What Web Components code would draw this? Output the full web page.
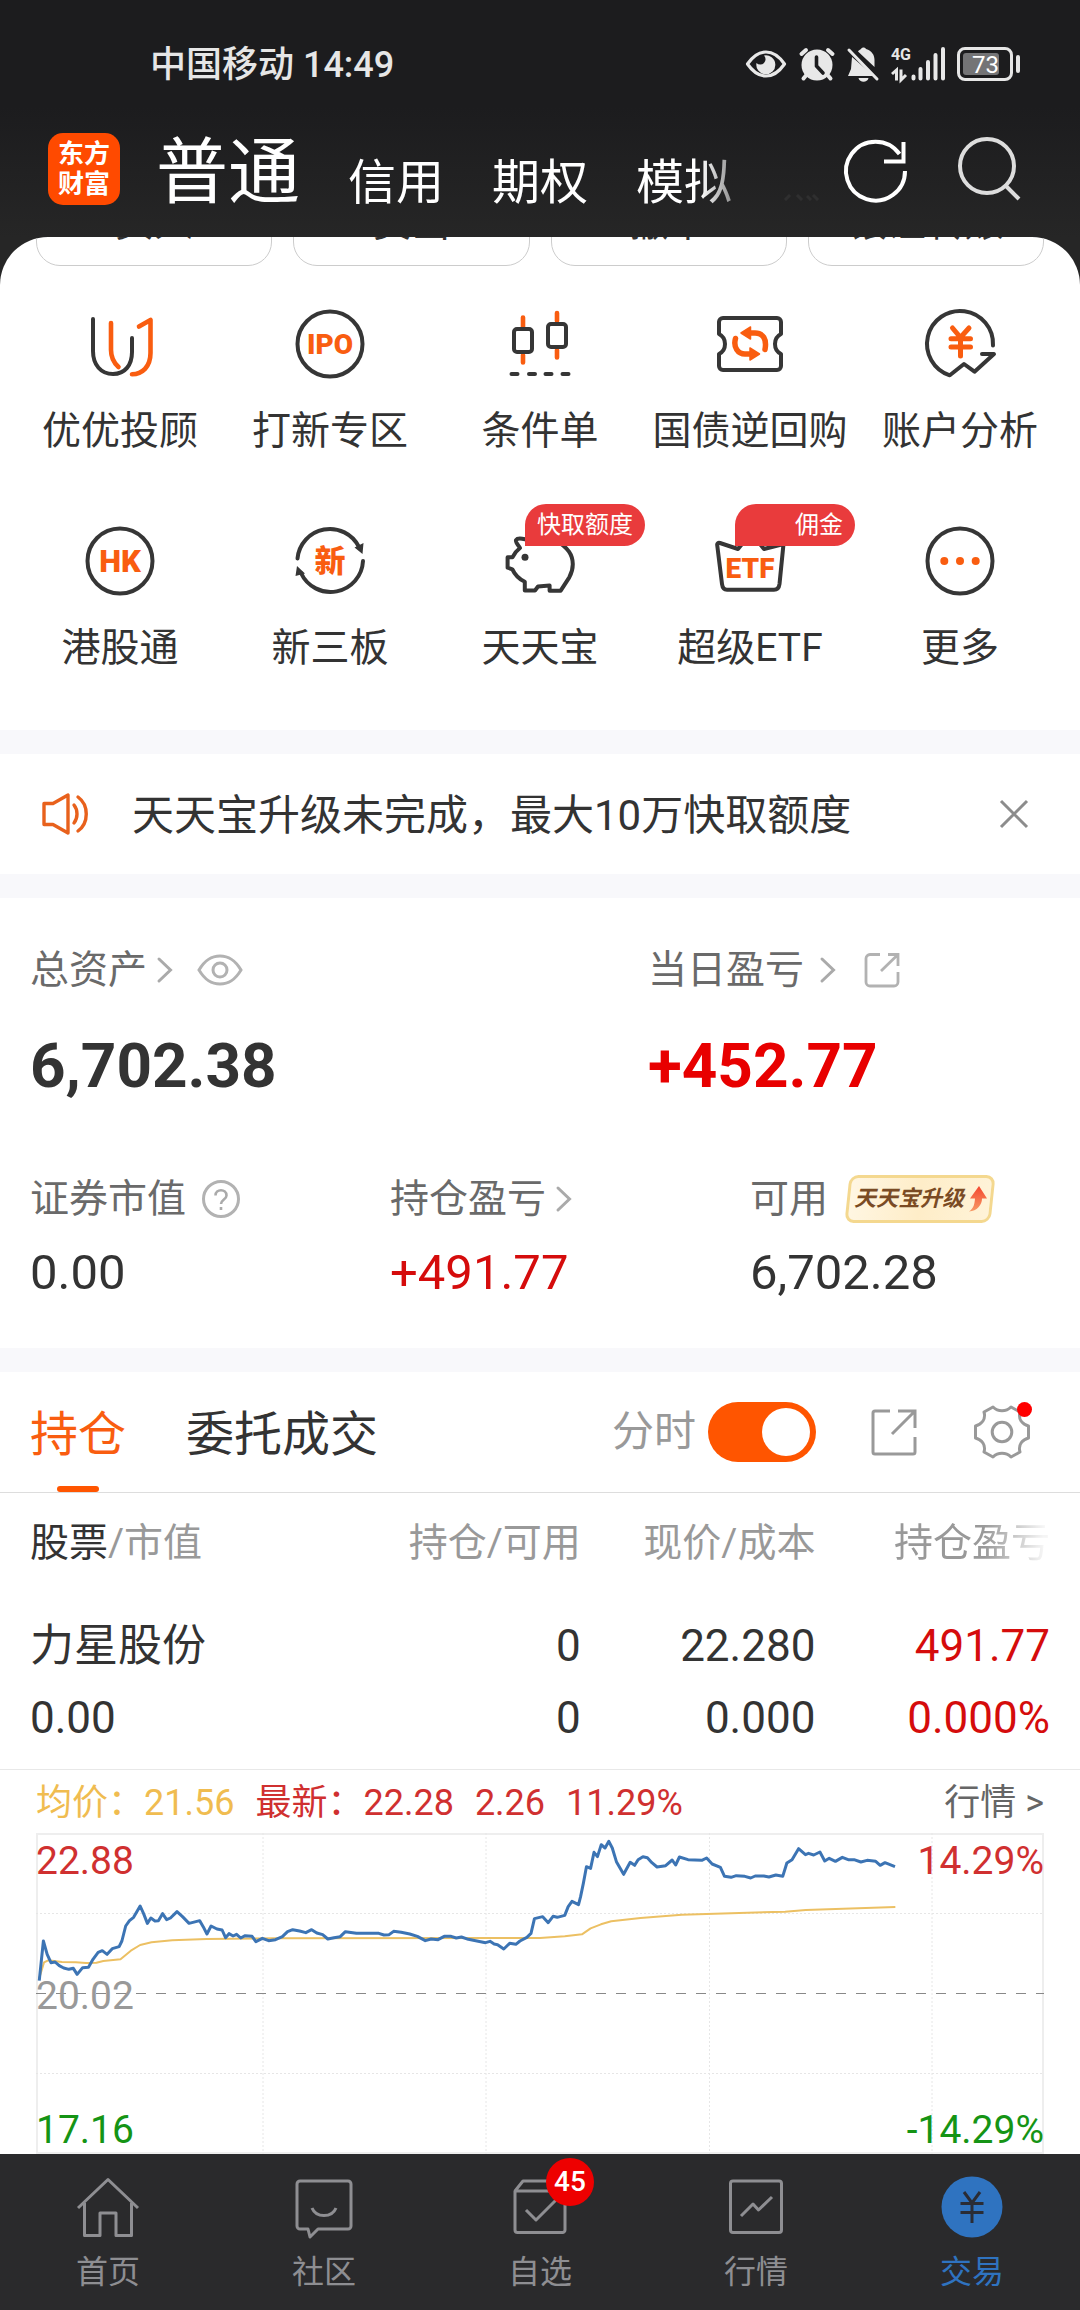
<!DOCTYPE html>
<html lang="zh-CN">
<head>
<meta charset="utf-8">
<meta name="viewport" content="width=device-width, initial-scale=1">
<title>交易</title>
<style>
  :root {
    --ink: #333;
    --muted: #666;
    --faint: #999;
    --brand: #ff5500;
    --up: #d50c0c;
    --band: #f8f8fb;
  }
  html, body { margin: 0; }
  body {
    font-family: Roboto, "Noto Sans CJK SC", sans-serif;
    color: var(--ink);
    background: #262626;
  }
</style>
</head>
<body>
<trade-page></trade-page>

<script>
const BASE = `
  *, *::before, *::after { box-sizing: border-box; }
  a { color: inherit; text-decoration: none; }
  button { font: inherit; color: inherit; background: none; border: 0; padding: 0; margin: 0; cursor: pointer; }
  svg { display: block; overflow: visible; }
`;

function define(name, css, html) {
  customElements.define(name, class extends HTMLElement {
    constructor() {
      super();
      this.attachShadow({ mode: 'open' });
    }
    connectedCallback() {
      const body = typeof html === 'function' ? html(this) : html;
      this.shadowRoot.innerHTML = `<style>${BASE}${css}</style>${body}`;
    }
  });
}

/* name: [width, height, markup] */
const D = 'fill="none" stroke="#363636" stroke-width="4" stroke-linecap="round" stroke-linejoin="round"';
const O = 'fill="none" stroke="#f95d10" stroke-width="4.6" stroke-linecap="round" stroke-linejoin="round"';
const G = 'fill="none" stroke="#999" stroke-width="3"';
const T = 'fill="none" stroke="#8e8e92" stroke-width="3" stroke-linejoin="round"';
const ICONS = {
  eyeStatus: [42, 28, `<path d="M2.5 14C8 6 14 2 21 2s13 4 18.500 12C34 22 28 26 21 26S8 22 2.500 14Z" fill="none" stroke="#e8e8e8" stroke-width="3.200" stroke-linejoin="round"/><path d="M19 5.500a9.500 9.500 0 1 1-7.500 7.500a5 5 0 0 0 7.500-7.500Z" fill="#e8e8e8"/>`],
  alarm: [36, 34, `<g fill="#e8e8e8"><circle cx="18" cy="18" r="15.500"/></g><path d="M2.500 7 7 3M33.500 7 29 3M7 28.500 4.500 31.500M29 28.500 31.500 31.500" stroke="#e8e8e8" stroke-width="4" stroke-linecap="round"/><path d="M17.500 10v9l6.500 7" fill="none" stroke="#1c1c1e" stroke-width="3.600" stroke-linecap="round" stroke-linejoin="round"/>`],
  mute: [32, 35, `<path d="M5 10 27 29H1l3-7Z" fill="#e8e8e8"/><path d="M11 4.500C12 3 13 2.500 14 2 15 0 18 0 19 2c6 2 8.500 6 8.500 11v7Z" fill="#e8e8e8"/><path d="M2 3 30 32" stroke="#e8e8e8" stroke-width="3" stroke-linecap="round"/><path d="M11.500 31h10c-1 5-9 5-10 0Z" fill="#e8e8e8"/>`],
  bars: [34, 34, `<path d="M2.500 29.500V31.500M9.500 22V31.500M17 15V31.500M24.500 8V31.500M32 2V31.500" stroke="#e8e8e8" stroke-width="4" stroke-linecap="round"/>`],
  updown: [16, 12, `<path d="M1 5 5.500 1V11.500M10 .5V11L15 6" fill="none" stroke="#e8e8e8" stroke-width="3"/>`],
  refresh: [64, 64, `<path d="M61 35A29.500 29.500 0 1 1 55.500 18" transform="translate(0 -1)" fill="none" stroke="#fff" stroke-width="4"/><path d="M59.500 5V24.500H40" fill="none" stroke="#fff" stroke-width="4"/>`],
  search: [64, 64, `<circle cx="31" cy="29" r="27" fill="none" stroke="#ddd" stroke-width="4"/><path d="M49 48 63 62" stroke="#ddd" stroke-width="4"/>`],
  more5: [40, 48, `<path d="M5 39 10 34M17 34l5 5M27 35l4 4M33 34l5 5" stroke="#fff" stroke-width="3"/>`],
  uu: [72, 72, `<path d="M9 11V43C9 57 17 66 29 66S48 57 48 44V30" ${D}/><path d="M27 15V42C27 50 30 55 34.500 59M55 18.500 66.500 12V45C66.500 59 58 66 48 66.300" ${O}/>`],
  ipo: [72, 72, `<circle cx="36" cy="36" r="32.500" ${D}/><text x="36" y="46" class="t" font-size="28">IPO</text>`],
  cond: [72, 72, `<path d="M19 9.500V19M19 47v7.500M53 5v8M53 42v7.500" ${O}/><rect x="10" y="21" width="18" height="23" rx="3" ${D}/><rect x="44" y="16" width="18" height="23" rx="3" ${D}/><path d="M7.500 66h6M25 66h6M41.500 66h6M58.500 66h6" ${D}/>`],
  bond: [72, 72, `<path d="M9 10H63a4 4 0 0 1 4 4V26C59 30 59 42 67 46V58a4 4 0 0 1-4 4H9a4 4 0 0 1-4-4V46C13 42 13 30 5 26V14a4 4 0 0 1 4-4Z" ${D}/><path d="M35 25H41C49 25 53 31 51 41.500M21.500 30.500C19 39 24 46 31 46H38" fill="none" stroke="#f95d10" stroke-width="5.500" stroke-linecap="round"/><path d="M36.500 19v12L27 25ZM36 40v12L45.500 46Z" fill="#f95d10" stroke="#f95d10" stroke-width="1.500" stroke-linejoin="round"/>`],
  account: [72, 72, `<path d="M69 37.500A33 33 0 1 0 25.800 67.300L40 56 50.500 63.700 70 46H58" ${D}/><path d="M28.500 20 36.500 29.500 45 20M36.500 30V48M27 30.800H46.500M27 39H46.500" fill="none" stroke="#f95d10" stroke-width="5" stroke-linecap="round"/>`],
  hk: [72, 72, `<circle cx="36" cy="36" r="32.500" ${D}/><text x="36" y="47" class="t" font-size="31">HK</text>`],
  neeq: [72, 72, `<path d="M3.500 33.500A32.500 32.500 0 0 1 65 22M69 36A32.500 32.500 0 0 1 7 48" ${D}/><path d="M60.500 22.500 69.500 18 68.500 29ZM3 41 11 48.500 1.500 51Z" fill="#363636"/><text x="36" y="47" class="t" font-size="31">新</text>`],
  pig: [72, 72, `<path d="M21 14.300C16 13 13 13.500 12 15S14 20 16 23C12 26 10 29 8.400 32.300H3.600V42.700L8.400 44.300C11 50 15 54 20.800 56.700V65.500H31L34 61.500 45.600 60.500V65.700H56.700L65.300 52.300C70 44 70 34 65 26.700 58 17 48 13 36 13Z" ${D}/><circle cx="21" cy="32.300" r="3.500" fill="#363636"/>`],
  etf: [72, 72, `<path d="M24 24 6 18C4 17.500 3 18.500 3.200 20L8 59C8.500 63 10 64.700 13 64.700H60C63 64.700 65 63 65.500 59L69.500 19 50 24 37 8Z" ${D}/><text x="36" y="53" class="t" font-size="28">ETF</text>`],
  more: [72, 72, `<circle cx="36" cy="36" r="32.500" ${D}/><g fill="#f95d10"><circle cx="20.300" cy="36" r="4"/><circle cx="36" cy="36" r="4"/><circle cx="51.700" cy="36" r="4"/></g>`],
  speaker: [48, 42, `<path d="M2 10.500H11L26 2V40L11 31.500H2Z" fill="none" stroke="#e8611c" stroke-width="3.400" stroke-linejoin="round"/><path d="M32 12C36 17 36 25 32 30M36 4C47 12 47 30 36 38" fill="none" stroke="#e8611c" stroke-width="3.400" stroke-linecap="round"/>`],
  close: [28, 28, `<path d="M1 1 27 27M27 1 1 27" stroke="#8c8c8c" stroke-width="3"/>`],
  chevron: [16, 26, `<path d="M2 2 13.500 13 2 24" fill="none" stroke="#aaa" stroke-width="3" stroke-linecap="round"/>`],
  eye: [46, 32, `<path d="M2 16C8 6 14 2 23 2s15 4 21 14C38 26 32 30 23 30S8 26 2 16Z" fill="none" stroke="#b2b2b2" stroke-width="3"/><circle cx="23" cy="16" r="7" fill="none" stroke="#b2b2b2" stroke-width="3"/>`],
  shareSmall: [36, 36, `<path d="M16 2.500H6a4 4 0 0 0-4 4V30a4 4 0 0 0 4 4H30a4 4 0 0 0 4-4V20M24 2.500H34V14M34 2.500 17 19" fill="none" stroke="#b2b2b2" stroke-width="2.800"/>`],
  help: [38, 38, `<circle cx="19" cy="19" r="17.500" fill="none" stroke="#b2b2b2" stroke-width="3"/><path d="M13.500 15.500C13.500 8.500 24.500 8.500 24.500 15.500 24.500 19.500 19 19.500 19 24M19 27v3" fill="none" stroke="#aaa" stroke-width="2.600"/>`],
  share: [48, 48, `<path d="M20 3H5a2 2 0 0 0-2 2V44a2 2 0 0 0 2 2H43a2 2 0 0 0 2-2V29M28 3H45V20M44 4 22 26" ${G}/>`],
  gear: [56, 56, `<path d="M19 3 C24 8 32 8 37 3 L46 8 C44 15 48 20 54.500 22 V34 C48 36 44 41 46 48 L37 53 C32 48 24 48 19 53 L10 48 C12 41 8 36 1.500 34 V22 C8 20 12 15 10 8Z" ${G} stroke-linejoin="round"/><circle cx="28" cy="28" r="9.800" ${G}/>`],
  upArrow: [20, 26, `<defs><linearGradient id="g" x1="0" y1="0" x2="0" y2="1"><stop offset="0" stop-color="#f4472f"/><stop offset="1" stop-color="#f79a66"/></linearGradient></defs><path d="M11 0 19 12.500H14C14 19 9 25 1 25.500 6 22 6.500 18 7 12.500H2Z" fill="url(#g)"/>`],
  home: [64, 64, `<path d="M2 33 32 4.500 62 33M8.500 28V60.500H24V38H40V60.500H55.500V28" ${T}/>`],
  chat: [64, 64, `<path d="M8 6H56a3 3 0 0 1 3 3V51a3 3 0 0 1-3 3H26L18 62 16 54H8a3 3 0 0 1-3-3V9a3 3 0 0 1 3-3ZM20 33C24 43 40 43 44 33" ${T}/>`],
  watch: [64, 64, `<path d="M7 16 15 6H50L57 16M7 16H57V55a2.500 2.500 0 0 1-2.500 2.500H9.500A2.500 2.500 0 0 1 7 55ZM18 35 28 45 50 23" ${T}/>`],
  market: [64, 64, `<rect x="6.500" y="6" width="51" height="51.500" rx="2.500" ${T}/><path d="M17 41 29 29 34.500 35 48 22" ${T}/>`],
  trade: [64, 64, `<circle cx="32" cy="32" r="30.500" fill="#2f73c0"/><path d="M24 17 32 28 40 17M32 28V48M20.500 28.500H43.500M20.500 37.500H43.500" fill="none" stroke="#2a2c35" stroke-width="3"/>`],
};

define('app-icon', `
  :host { display: block; flex: none; }
  .t { font-family: Roboto, "Noto Sans CJK SC", sans-serif; font-weight: 900; text-anchor: middle; fill: #f95d10; }
`, el => {
  const [w, h, m] = ICONS[el.getAttribute('name')];
  return `<svg width="${w}" height="${h}" viewBox="0 0 ${w} ${h}" aria-hidden="true">${m}</svg>`;
});

define('status-bar', `
  :host { display: flex; align-items: center; justify-content: space-between; height: 128px; padding: 0 60px 0 150px; color: #e6e6e6; font-size: 36px; line-height: 48px; }
  .carrier { font-weight: 500; padding-top: 2px; }
  .right { display: flex; align-items: center; gap: 12px; }
  .net { display: flex; }
  .gen { display: flex; flex-direction: column; justify-content: space-between; font-size: 16px; line-height: 16px; font-weight: 700; }
  .cell { display: flex; align-items: center; gap: 3px; }
  .shell { width: 56px; height: 34px; border: 3px solid #e6e6e6; border-radius: 8px; padding: 3px; }
  .level { width: 36px; height: 22px; border-radius: 3px; background: #747476; font-size: 24px; line-height: 24px; text-align: right; color: #fff; }
  .tip { width: 4px; height: 18px; border-radius: 2px; background: #e6e6e6; }
`, `
  <span class="carrier">中国移动 14:49</span>
  <div class="right">
    <app-icon name="eyeStatus"></app-icon>
    <app-icon name="alarm"></app-icon>
    <app-icon name="mute"></app-icon>
    <div class="net"><div class="gen"><span>4G</span><app-icon name="updown"></app-icon></div><app-icon name="bars"></app-icon></div>
    <div class="cell"><div class="shell"><div class="level">73</div></div><div class="tip"></div></div>
  </div>
`);

define('account-header', `
  :host { display: flex; align-items: center; padding: 0 60px 27px 48px; height: 109px; color: #fff; }
  .logo { flex: none; display: grid; place-content: center; width: 72px; height: 72px; border-radius: 15px; background: #ff4a00; font-size: 26px; line-height: 30px; font-weight: 700; text-align: center; margin-right: 36px; }
  nav { flex: 1; min-width: 0; display: flex; align-items: flex-end; gap: 48px; padding-top: 8px; font-size: 48px; line-height: 52px; white-space: nowrap;
    -webkit-mask-image: linear-gradient(90deg, #000 calc(100% - 120px), rgba(0,0,0,.06) calc(100% - 60px));
    mask-image: linear-gradient(90deg, #000 calc(100% - 120px), rgba(0,0,0,.06) calc(100% - 60px)); }
  nav a { flex: none; }
  nav a[aria-current] { font-size: 72px; line-height: 72px; }
  .tools { display: flex; gap: 48px; margin-left: 24px; }
`, `
  <a class="logo" href="#app"><span>东方<br>财富</span></a>
  <nav>
    <a href="#normal" aria-current="page">普通</a>
    <a href="#credit">信用</a>
    <a href="#option">期权</a>
    <a href="#paper">模拟</a>
    <app-icon name="more5"></app-icon>
  </nav>
  <div class="tools">
    <button aria-label="刷新"><app-icon name="refresh"></app-icon></button>
    <button aria-label="搜索"><app-icon name="search"></app-icon></button>
  </div>
`);

/* Tail of the primary action row, scrolled most of the way under the header. */
define('action-strip', `
  :host { display: flex; align-items: flex-end; gap: 21px; height: 29px; padding: 0 36px; overflow: hidden; }
  button { flex: 1; height: 86px; border: 1px solid #ccc; border-radius: 24px; font-size: 39px; line-height: 48px; }
`, `<button>买入</button><button>卖出</button><button>撤单</button><button>银证转账</button>`);

define('quick-entry', `
  :host { display: block; }
  a { display: flex; flex-direction: column; align-items: center; gap: 26px; font-size: 39px; line-height: 50px; white-space: nowrap; }
  .pic { position: relative; }
  .tag { position: absolute; left: 21px; top: -21px; width: 120px; height: 42px; padding: 0 12px; border-radius: 21px 21px 21px 0; background: #e93b3c; color: #fff; font-size: 24px; line-height: 42px; text-align: right; }
`, el => `
  <a href="#entry">
    <span class="pic"><app-icon name="${el.getAttribute('icon')}"></app-icon>${el.hasAttribute('tag') ? `<span class="tag">${el.getAttribute('tag')}</span>` : ''}</span>
    <span><slot></slot></span>
  </a>
`);

define('quick-grid', `
  :host { display: grid; grid-template-columns: repeat(5, 1fr); row-gap: 69px; padding: 42px 15px 57px; }
`, `<slot></slot>`);

define('notice-bar', `
  :host { display: flex; align-items: center; height: 120px; padding: 0 52px 0 42px; font-size: 42px; line-height: 60px; }
  a { flex: 1; margin-left: 42px; padding-top: 4px; }
`, `
  <app-icon name="speaker"></app-icon>
  <a href="#notice"><slot></slot></a>
  <button aria-label="关闭"><app-icon name="close"></app-icon></button>
`);

define('asset-stat', `
  :host { display: block; padding-left: 30px; }
  .label { display: flex; align-items: center; height: 48px; font-size: 39px; line-height: 48px; color: #6a6a6a; }
  .value { margin-top: 22px; font-size: 49px; line-height: 56px; }
  :host([big]) .value { margin-top: 36px; font-size: 62px; line-height: 72px; font-weight: 700; }
  :host([up]) .value { color: var(--up); }
  :host([big][up]) .value { color: #e80000; }
`, el => `
  <div class="label"><span>${el.getAttribute('label')}</span><slot name="extra"></slot></div>
  <div class="value"><slot></slot></div>
`);

define('promo-chip', `
  :host { display: block; }
  a { position: relative; z-index: 0; display: flex; align-items: center; gap: 4px; height: 48px; padding: 0 8px 0 10px; font-size: 22px; line-height: 44px; font-weight: 700; font-style: italic; color: #7a4b24; }
  a::before { content: ""; position: absolute; z-index: -1; inset: 0 3px; transform: skewX(-6deg); border: 3px solid #f4d88f; border-radius: 9px; background: linear-gradient(90deg, #fff6e2, #feedc8 50%, #fff3d8); }
`, `<a href="#upgrade"><slot></slot><app-icon name="upArrow"></app-icon></a>`);

define('asset-summary', `
  :host { display: block; padding: 48px 0 47px; }
  .top { display: grid; grid-template-columns: 60% 40%; }
  .top asset-stat + asset-stat { padding-left: 0; }
  .rest { display: grid; grid-template-columns: repeat(3, 1fr); margin-top: 73px; }
  [slot] { margin-left: 10px; }
  .wide { margin-left: 24px; }
  .wider { margin-left: 28px; }
  .near { margin-left: 16px; }
`, `
  <div class="top">
    <asset-stat big label="总资产">6,702.38<app-icon slot="extra" name="chevron"></app-icon><app-icon slot="extra" class="wide" name="eye"></app-icon></asset-stat>
    <asset-stat big up label="当日盈亏">+452.77<app-icon slot="extra" class="near" name="chevron"></app-icon><app-icon slot="extra" class="wider" name="shareSmall"></app-icon></asset-stat>
  </div>
  <div class="rest">
    <asset-stat label="证券市值">0.00<app-icon slot="extra" class="near" name="help"></app-icon></asset-stat>
    <asset-stat up label="持仓盈亏">+491.77<app-icon slot="extra" name="chevron"></app-icon></asset-stat>
    <asset-stat label="可用">6,702.28<promo-chip slot="extra" class="near">天天宝升级</promo-chip></asset-stat>
  </div>
`);

define('toggle-switch', `
  :host { display: block; }
  label { display: flex; align-items: center; gap: 12px; font-size: 42px; line-height: 60px; color: var(--faint); }
  input { appearance: none; -webkit-appearance: none; margin: 0; width: 108px; height: 60px; border-radius: 30px; background: #ccc; padding: 6px; display: flex; }
  input::before { content: ""; width: 48px; height: 48px; border-radius: 50%; background: #fff; }
  input:checked { background: var(--brand); justify-content: flex-end; }
`, `<label for="sw"><slot></slot><input id="sw" type="checkbox" role="switch" checked></label>`);

define('holdings-bar', `
  :host { display: flex; align-items: center; justify-content: space-between; height: 121px; padding: 0 50px 0 30px; border-bottom: 1px solid #ddd; }
  nav { display: flex; align-self: stretch; gap: 60px; font-size: 48px; line-height: 60px; }
  nav a { display: flex; flex-direction: column; align-items: center; justify-content: space-between; padding-top: 33px; }
  nav a[aria-current] { color: #f95d10; }
  nav a[aria-current]::after { content: ""; width: 42px; height: 6px; border-radius: 3px; background: #ff5500; }
  .tools { display: flex; align-items: center; }
  .share { margin-left: 54px; }
  .gear { position: relative; margin-left: 56px; }
  .dot { position: absolute; right: -2px; top: -2px; width: 15px; height: 15px; border-radius: 50%; background: #f00; }
`, `
  <nav><a href="#position" aria-current="page">持仓</a><a href="#orders">委托成交</a></nav>
  <div class="tools">
    <toggle-switch>分时</toggle-switch>
    <button class="share" aria-label="分享"><app-icon name="share"></app-icon></button>
    <button class="gear" aria-label="设置"><app-icon name="gear"></app-icon><span class="dot"></span></button>
  </div>
`);

define('holdings-table', `
  :host { display: block; padding: 0 30px; border-bottom: 1px solid #e8e8e8; }
  table { width: 100%; border-collapse: collapse; table-layout: fixed; text-align: right; }
  th { padding: 26px 0 22px; font-size: 39px; line-height: 48px; font-weight: 400; color: var(--faint); white-space: nowrap; }
  th b { font-weight: 400; color: var(--ink); }
  th:last-child { -webkit-mask-image: linear-gradient(90deg, #000 72%, rgba(0,0,0,.1) 97%); mask-image: linear-gradient(90deg, #000 72%, rgba(0,0,0,.1) 97%); }
  td { padding: 21px 0 15px; font-size: 44px; line-height: 72px; }
  td div { white-space: nowrap; }
  th:first-child, td:first-child { width: 29%; text-align: left; }
  th:nth-child(2) { width: 25%; }
  th:nth-child(n+3) { width: 23%; }
  .up { color: var(--up); }
`, `
  <table>
    <thead><tr><th><b>股票</b>/市值</th><th>持仓/可用</th><th>现价/成本</th><th>持仓盈亏</th></tr></thead>
    <tbody><tr>
      <td><div>力星股份</div><div>0.00</div></td>
      <td><div>0</div><div>0</div></td>
      <td><div>22.280</div><div>0.000</div></td>
      <td class="up"><div>491.77</div><div>0.000%</div></td>
    </tr></tbody>
  </table>
`);

define('intraday-chart', `
  :host { display: block; padding: 0 36px; }
  .head { display: flex; gap: 21px; height: 63px; font-size: 36px; line-height: 66px; color: #d03030; white-space: nowrap; }
  .avg { color: #f0bc50; }
  .head a { margin-left: auto; color: var(--muted); }
  .plot { display: grid; height: 321px; }
  .plot > * { grid-area: 1 / 1; }
  svg { width: 100%; height: 321px; }
  .scale { display: flex; flex-direction: column; justify-content: space-between; padding: 8px 0 4px; font-size: 39px; line-height: 40px; color: var(--faint); }
  .scale .row { display: flex; justify-content: space-between; }
  .hi { color: #d03030; }
  .lo { color: #159415; }
`, `
  <div class="head"><span class="avg">均价：21.56</span><span>最新：22.28</span><span>2.26</span><span>11.29%</span><a href="#quote">行情 &gt;</a></div>
  <div class="plot">
    <svg viewBox="0 0 1008 321" preserveAspectRatio="none" role="img" aria-label="分时走势">
      <rect x="1" y="1" width="1006" height="319" fill="none" stroke="#eee" stroke-width="2"/>
      <path d="M0 80.500H1008M0 240.500H1008M227 0V321M450 0V321M673.500 0V321M896 0V321" fill="none" stroke="#e6e6e6" stroke-width="1" stroke-dasharray="2 2"/>
      <path d="M0 160.500H1008" stroke="#888" stroke-width="1" stroke-dasharray="10 10"/>
      <g transform="translate(-36 -73) scale(.34436 .33333)" fill="none" stroke-linejoin="round">
        <polyline vector-effect="non-scaling-stroke" stroke="#ecc063" stroke-width="2" points="114,655 128,607 140,601 180,606 220,607 250,609 280,608 300,603 350,598 380,572 407,555 440,547 500,541 600,537 800,535 1568,534 1640,529 1690,523 1715,505 1745,493 1775,484 1860,474 1980,464 2280,455 2340,450 2600,441"/>
        <polyline vector-effect="non-scaling-stroke" stroke="#3c74b4" stroke-width="3" points="114,662 126,543 137,583 148,608 160,606 172,617 185,624 200,628 213,625 224,643 240,623 257,622 270,598 285,577 297,572 311,583 326,566 346,560 354,543 365,498 376,482 388,472 407,438 417,461 428,490 438,474 450,483 460,482 472,461 484,479 495,474 514,455 530,470 549,490 580,482 590,500 601,522 613,498 630,507 645,510 655,533 665,521 677,528 687,523 699,534 712,527 732,529 743,545 762,535 780,542 800,539 820,530 835,515 850,509 870,513 888,518 905,509 920,519 937,524 952,537 970,533 988,530 1003,515 1035,520 1100,520 1115,525 1130,524 1143,514 1165,517 1190,522 1212,529 1235,542 1252,537 1272,539 1290,529 1310,529 1325,534 1340,531 1360,538 1410,548 1423,544 1435,552 1445,554 1463,567 1480,550 1498,553 1510,543 1530,532 1542,520 1552,476 1576,470 1592,488 1606,469 1618,472 1640,466 1650,440 1661,424 1680,434 1686,410 1694,370 1703,320 1715,325 1725,277 1735,290 1746,254 1757,264 1768,244 1778,264 1790,305 1811,343 1830,307 1843,316 1853,299 1867,290 1880,293 1893,308 1908,321 1933,317 1952,300 1962,315 1973,291 1998,299 2038,301 2052,294 2068,312 2092,322 2104,349 2123,352 2138,347 2163,349 2180,354 2193,348 2218,348 2233,351 2253,345 2273,349 2285,309 2300,299 2319,266 2339,284 2348,280 2363,285 2381,276 2395,303 2408,295 2426,304 2446,292 2463,299 2480,299 2500,306 2518,301 2543,304 2556,316 2570,308 2599,320"/>
      </g>
    </svg>
    <div class="scale">
      <div class="row hi"><span>22.88</span><span>14.29%</span></div>
      <div class="row"><span>20.02</span></div>
      <div class="row lo"><span>17.16</span><span>-14.29%</span></div>
    </div>
  </div>
`);

define('tab-item', `
  :host { display: block; flex: 1; color: #8e8e92; }
  :host([active]) { color: #2f73c0; }
  a { display: flex; flex-direction: column; align-items: center; gap: 15px; font-size: 32px; line-height: 36px; }
  .pic { position: relative; }
  .count { position: absolute; left: 38px; top: -17px; width: 48px; height: 48px; border-radius: 50%; background: #ee0000; color: #fff; font-size: 28px; line-height: 48px; font-weight: 500; text-align: center; }
`, el => `
  <a href="#tab"><span class="pic"><app-icon name="${el.getAttribute('icon')}"></app-icon>${el.hasAttribute('count') ? `<span class="count">${el.getAttribute('count')}</span>` : ''}</span><span><slot></slot></span></a>
`);

define('tab-bar', `
  :host { display: flex; position: sticky; bottom: 0; height: 156px; padding-top: 21px; background: #2a2a2c; }
`, `<slot></slot>`);

define('trade-page', `
  :host { display: block; }
  header { background: linear-gradient(#1c1c1e 45%, #262626); }
  main { background: #fff; border-radius: 48px 48px 0 0; overflow: hidden; }
  hr { margin: 0; border: 0; height: 24px; background: var(--band); }
`, `
  <header><status-bar></status-bar><account-header></account-header></header>
  <main>
    <action-strip></action-strip>
    <quick-grid>
      <quick-entry icon="uu">优优投顾</quick-entry>
      <quick-entry icon="ipo">打新专区</quick-entry>
      <quick-entry icon="cond">条件单</quick-entry>
      <quick-entry icon="bond">国债逆回购</quick-entry>
      <quick-entry icon="account">账户分析</quick-entry>
      <quick-entry icon="hk">港股通</quick-entry>
      <quick-entry icon="neeq">新三板</quick-entry>
      <quick-entry icon="pig" tag="快取额度">天天宝</quick-entry>
      <quick-entry icon="etf" tag="佣金">超级ETF</quick-entry>
      <quick-entry icon="more">更多</quick-entry>
    </quick-grid>
    <hr>
    <notice-bar>天天宝升级未完成，最大10万快取额度</notice-bar>
    <hr>
    <asset-summary></asset-summary>
    <hr>
    <holdings-bar></holdings-bar>
    <holdings-table></holdings-table>
    <intraday-chart></intraday-chart>
  </main>
  <tab-bar>
    <tab-item icon="home">首页</tab-item>
    <tab-item icon="chat">社区</tab-item>
    <tab-item icon="watch" count="45">自选</tab-item>
    <tab-item icon="market">行情</tab-item>
    <tab-item icon="trade" active>交易</tab-item>
  </tab-bar>
`);
</script>
</body>
</html>
